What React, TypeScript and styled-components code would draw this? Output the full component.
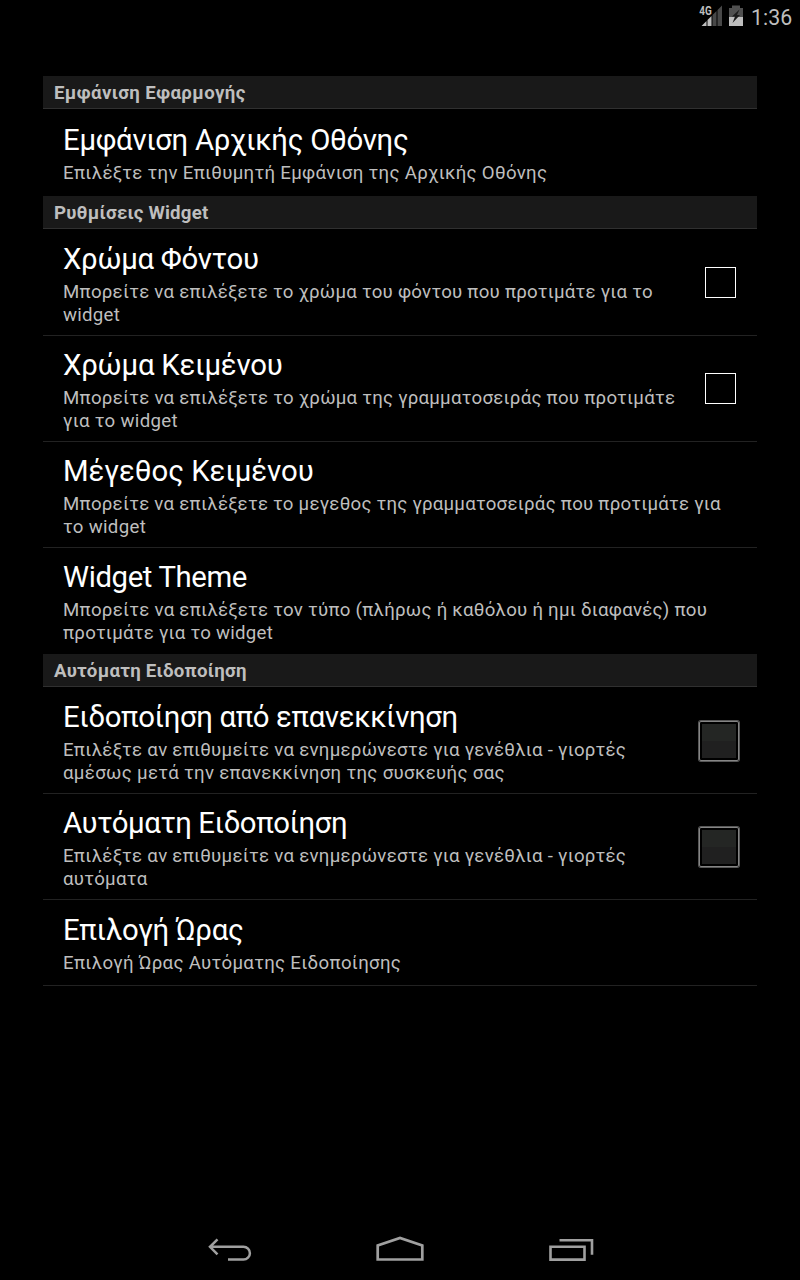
import React from "react";
import styled, { createGlobalStyle } from "styled-components";

const Global = createGlobalStyle`
  body { margin: 0; background: #000; }
  * { box-sizing: border-box; }
`;

const Screen = styled.div`
  display: flex;
  flex-direction: column;
  height: 1280px;
  background: #000;
  color: #fff;
  font-family: Roboto, sans-serif;
`;

const StatusBar = styled.header`
  display: flex;
  flex: none;
  align-items: flex-start;
  justify-content: flex-end;
  height: 76px;
  padding: 0 8px 0 0;
`;

const StatusIcons = styled.svg`
  flex: none;
  margin-right: 7px;
  overflow: visible;
`;

const Clock = styled.span`
  width: 41px;
  margin-top: 5px;
  font-size: 21.33px;
  line-height: 25px;
  color: #bebebe;
  white-space: nowrap;
`;

const Preferences = styled.main`
  flex: 1;
  padding: 0 43px;
`;

const SectionTitle = styled.h2<{ $spacing: number }>`
  height: 33px;
  margin: 0;
  padding-left: 11px;
  border-bottom: 1px solid #303030;
  background: #191919;
  color: #bebebe;
  font-size: 18.67px;
  font-weight: 700;
  line-height: 34px;
  letter-spacing: ${(p) => p.$spacing}px;
  white-space: nowrap;
`;

const Row = styled.div<{ $height: number; $divider: boolean; $top: number }>`
  display: flex;
  height: ${(p) => p.$height}px;
  padding: ${(p) => p.$top}px 17px 0 20px;
  border-bottom: ${(p) => (p.$divider ? "1px solid #222" : "none")};
`;

const RowText = styled.div`
  flex: 1;
  min-width: 0;
  white-space: nowrap;
`;

const Title = styled.div<{ $spacing: number }>`
  margin-bottom: 4px;
  font-size: 29.33px;
  line-height: 36px;
  letter-spacing: ${(p) => p.$spacing}px;
`;

const Line = styled.div<{ $spacing: number }>`
  color: #bebebe;
  font-size: 18.67px;
  line-height: 23px;
  letter-spacing: ${(p) => p.$spacing}px;
`;

const Swatch = styled.div`
  flex: none;
  width: 31px;
  height: 31px;
  margin: 26px 4px 0 0;
  border: 1px solid #fff;
`;

const CheckBox = styled.div`
  flex: none;
  width: 40px;
  height: 40px;
  margin: 22px 1px 0 0;
  padding: 2px;
  border: 1px solid #858585;
  border-radius: 2px;
  box-shadow: 0 0 0 1px #585858;

  &::before {
    content: "";
    display: block;
    height: 34px;
    background: linear-gradient(#242624 50%, #202020 50%);
  }
`;

const NavBar = styled.nav`
  display: flex;
  flex: none;
  justify-content: center;
  gap: 90px;
  height: 55px;
`;

type Text = [text: string, spacing: number];
type Item = { title: Text; lines: Text[]; height: number; top: number; divider?: boolean; widget?: "swatch" | "check" };
type Section = { title: Text; items: Item[] };

const sections: Section[] = [
  {
    title: ["Εμφάνιση Εφαρμογής", 0.38],
    items: [
      { title: ["Εμφάνιση Αρχικής Οθόνης", -0.29], lines: [["Επιλέξτε την Επιθυμητή Εμφάνιση της Αρχικής Οθόνης", 0.3]], height: 87, top: 13 },
    ],
  },
  {
    title: ["Ρυθμίσεις Widget", 0.2],
    items: [
      { title: ["Χρώμα Φόντου", -0.3], lines: [["Μπορείτε να επιλέξετε το χρώμα του φόντου που προτιμάτε για το", 0.24], ["widget", 0.25]], height: 107, top: 12, divider: true, widget: "swatch" },
      { title: ["Χρώμα Κειμένου", -0.22], lines: [["Μπορείτε να επιλέξετε το χρώμα της γραμματοσειράς που προτιμάτε", 0.25], ["για το widget", 0.32]], height: 106, top: 11, divider: true, widget: "swatch" },
      { title: ["Μέγεθος Κειμένου", -0.04], lines: [["Μπορείτε να επιλέξετε το μεγεθος της γραμματοσειράς που προτιμάτε για", 0.245], ["το widget", 0.3]], height: 106, top: 11, divider: true },
      { title: ["Widget Theme", -0.37], lines: [["Μπορείτε να επιλέξετε τον τύπο (πλήρως ή καθόλου ή ημι διαφανές) που", 0.255], ["προτιμάτε για το widget", 0.25]], height: 106, top: 11 },
    ],
  },
  {
    title: ["Αυτόματη Ειδοποίηση", 0.25],
    items: [
      { title: ["Ειδοποίηση από επανεκκίνηση", -0.36], lines: [["Επιλέξτε αν επιθυμείτε να ενημερώνεστε για γενέθλια - γιορτές", 0.27], ["αμέσως μετά την επανεκκίνηση της συσκευής σας", 0.32]], height: 107, top: 12, divider: true, widget: "check" },
      { title: ["Αυτόματη Ειδοποίηση", -0.42], lines: [["Επιλέξτε αν επιθυμείτε να ενημερώνεστε για γενέθλια - γιορτές", 0.27], ["αυτόματα", 0.3]], height: 106, top: 11, divider: true, widget: "check" },
      { title: ["Επιλογή Ώρας", -0.3], lines: [["Επιλογή Ώρας Αυτόματης Ειδοποίησης", 0.31]], height: 86, top: 12, divider: true },
    ],
  },
];

export default function App() {
  return (
    <Screen>
      <Global />
      <StatusBar>
        <StatusIcons width="45" height="30" viewBox="699 0 45 30">
          <path d="M722 5.500V26h-4.500V10z M716.500 11V26h-4V15z" fill="#484848" />
          <path d="M711.500 16V26h-4v-6z M706.500 21V26h-5z" fill="#bebebe" />
          <text x="699.300" y="14.800" fontFamily="Roboto, sans-serif" fontSize="12.500" fontWeight="700" textLength="12.500" lengthAdjust="spacingAndGlyphs" fill="#bebebe">4G</text>
          <path d="M732 5.500h8v2.500h3v9h-14v-9h3z" fill="#505050" />
          <path d="M729 17h14v9h-14z" fill="#bebebe" />
          <path d="M739.500 9.500l-7.500 7h3l-2.500 6.500 7.500-8h-3z" fill="#1c1c1c" />
        </StatusIcons>
        <Clock>1:36</Clock>
      </StatusBar>
      <Preferences>
        {sections.map((section) => (
          <section key={section.title[0]}>
            <SectionTitle $spacing={section.title[1]}>{section.title[0]}</SectionTitle>
            {section.items.map((item) => (
              <Row key={item.title[0]} $height={item.height} $divider={!!item.divider} $top={item.top}>
                <RowText>
                  <Title $spacing={item.title[1]}>{item.title[0]}</Title>
                  {item.lines.map(([text, spacing]) => (
                    <Line key={text} $spacing={spacing}>{text}</Line>
                  ))}
                </RowText>
                {item.widget === "swatch" && <Swatch />}
                {item.widget === "check" && <CheckBox />}
              </Row>
            ))}
          </section>
        ))}
      </Preferences>
      <NavBar>
        <svg width="80" height="50" fill="none" stroke="#a0a0a0" strokeWidth="2.500">
          <path d="M20 21.800H53.500a6.400 6.400 0 0 1 0 12.800H38M27.500 14.300L20 21.800l7.500 7.500" />
        </svg>
        <svg width="80" height="50" fill="none" stroke="#a0a0a0" strokeWidth="2.700">
          <path d="M17.700 34.500V20.500L40 13l22.300 7.500v14z" />
        </svg>
        <svg width="80" height="50" fill="none" stroke="#a0a0a0" strokeWidth="2.600">
          <path d="M20.500 21.800h34v12.800h-34zM29.500 15.200H62v14.500" />
        </svg>
      </NavBar>
    </Screen>
  );
}
